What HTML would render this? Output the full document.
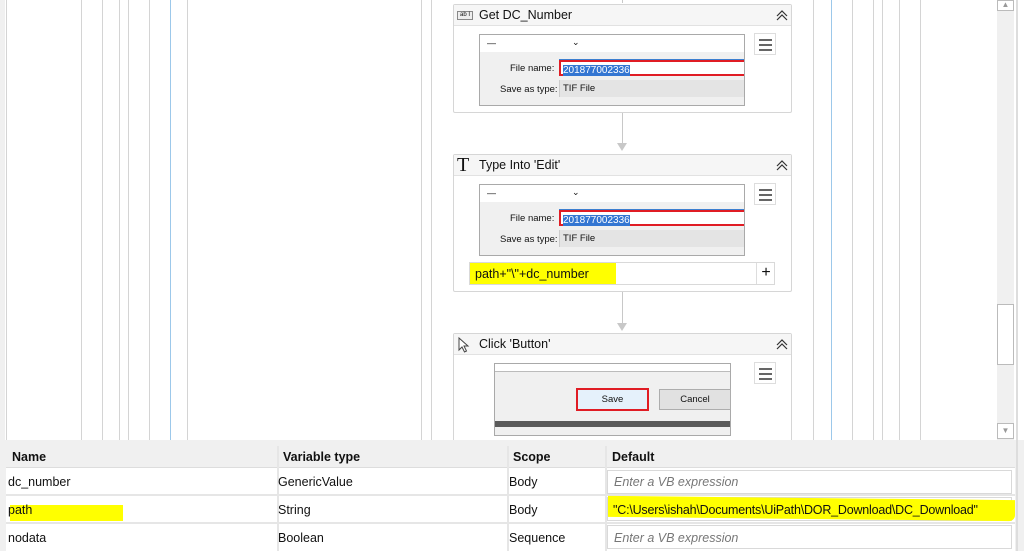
<!DOCTYPE html>
<html><head><meta charset="utf-8"><style>
*{margin:0;padding:0;box-sizing:border-box}
body{width:1024px;height:551px;position:relative;overflow:hidden;background:#fff;font-family:"Liberation Sans",sans-serif;font-size:12px;color:#111}
.a{position:absolute}
.vl{position:absolute;top:0;height:440px;width:1px;background:#d4d4d4}
.card{position:absolute;border:1px solid #d6d6d6;border-radius:2px;background:#fff}
.hd{position:absolute;left:0;right:0;top:0;height:21px;background:#f6f6f6;border-bottom:1px solid #e2e2e2;font-size:12.5px}
.hd span{position:absolute;left:25px;top:3px}
.chev{position:absolute;right:3px;top:5px}
.dlg{position:absolute;border:1px solid #a9a9a9;background:#f0f0f0;overflow:hidden}
.ham{position:absolute;width:22px;height:22px;border:1px solid #ddd;background:#fff}
.ham i{position:absolute;left:4px;width:13px;height:2px;background:#666}
.arrow{position:absolute;width:1px;background:#c8c8c8}
.tri{position:absolute;width:0;height:0;border-left:5px solid transparent;border-right:5px solid transparent;border-top:8px solid #c8c8c8}
.cell{position:absolute;font-size:12.5px}
.inp{position:absolute;border:1px solid #d9d9d9;background:#fff;font-size:12.5px;padding:6px 0 0 6px}
.pan{z-index:5}
</style></head><body>
<div class="a" style="left:0;top:0;width:5px;height:440px;background:#f0f0f0"></div>
<div class="vl" style="left:6px"></div>
<div class="vl" style="left:81px"></div><div class="vl" style="left:102px"></div><div class="vl" style="left:119px"></div><div class="vl" style="left:128px"></div><div class="vl" style="left:149px"></div><div class="vl" style="left:170px;background:#9cc8ea"></div><div class="vl" style="left:187px"></div><div class="vl" style="left:421px"></div><div class="vl" style="left:431px"></div>
<div class="vl" style="left:813px"></div><div class="vl" style="left:831px;background:#9cc8ea"></div><div class="vl" style="left:852px"></div><div class="vl" style="left:873px"></div><div class="vl" style="left:882px"></div><div class="vl" style="left:899px"></div><div class="vl" style="left:920px"></div>
<div class="a" style="left:997px;top:0;width:17px;height:440px;background:#f0f0f0"></div>
<div class="a" style="left:997px;top:0;width:17px;height:11px;border:1px solid #bbb;background:#fff;font-size:8px;color:#999;text-align:center;line-height:8px">▲</div>
<div class="a" style="left:997px;top:304px;width:17px;height:61px;border:1px solid #bbb;background:#fff"></div>
<div class="a" style="left:997px;top:423px;width:17px;height:16px;border:1px solid #bbb;background:#fff;font-size:8px;color:#999;text-align:center;line-height:14px">▼</div>
<div class="a" style="left:1016px;top:0;width:2px;height:551px;background:#ddd;z-index:6"></div>

<div class="arrow" style="left:622px;top:0;height:3px"></div>
<div class="arrow" style="left:622px;top:113px;height:30px"></div><div class="tri" style="left:617px;top:143px"></div>
<div class="arrow" style="left:622px;top:292px;height:31px"></div><div class="tri" style="left:617px;top:323px"></div>

<div class="card" style="left:453px;top:4px;width:339px;height:109px">
 <div class="hd"><div class="a" style="left:3px;top:6px;width:16px;height:9px;border:1px solid #888;font-size:6px;line-height:7px;text-align:center;background:#eee">ab I</div><span>Get DC_Number</span><svg class="chev" width="12" height="11" viewBox="0 0 12 11"><path d="M1 6 L6 1 L11 6 M1 10 L6 5 L11 10" fill="none" stroke="#333" stroke-width="1.2"/></svg></div>
 <div class="dlg" style="left:25px;top:29px;width:266px;height:72px">
  <div class="a" style="left:0;top:0;width:266px;height:17px;background:#fff"></div>
  <div class="a" style="left:7px;top:3px;font-size:9px">—</div>
  <div class="a" style="left:92px;top:2px;font-size:9px">⌄</div>
  <div class="a" style="left:30px;top:28px;font-size:9.5px">File name:</div>
  <div class="a" style="left:79px;top:25px;width:190px;height:16px;border:2px solid #e01c24;background:#fff;box-shadow:0 -1px 0 #3c7fd0"><span style="background:#3476d2;color:#fff;font-size:10px;margin-left:2px">201877002336</span></div>
  <div class="a" style="left:20px;top:49px;font-size:9.5px">Save as type:</div>
  <div class="a" style="left:79px;top:45px;width:190px;height:17px;background:#e4e4e4;border-left:1px solid #ccc;font-size:9.5px;padding:3px 0 0 3px">TIF File</div>
 </div>
 <div class="ham" style="left:300px;top:28px"><i style="top:5px"></i><i style="top:10px"></i><i style="top:15px"></i></div>
</div>

<div class="card" style="left:453px;top:154px;width:339px;height:138px">
 <div class="hd"><div class="a" style="left:3px;top:0;font-family:'Liberation Serif',serif;font-size:20px;line-height:20px">T</div><span>Type Into 'Edit'</span><svg class="chev" width="12" height="11" viewBox="0 0 12 11"><path d="M1 6 L6 1 L11 6 M1 10 L6 5 L11 10" fill="none" stroke="#333" stroke-width="1.2"/></svg></div>
 <div class="dlg" style="left:25px;top:29px;width:266px;height:72px">
  <div class="a" style="left:0;top:0;width:266px;height:17px;background:#fff"></div>
  <div class="a" style="left:7px;top:3px;font-size:9px">—</div>
  <div class="a" style="left:92px;top:2px;font-size:9px">⌄</div>
  <div class="a" style="left:30px;top:28px;font-size:9.5px">File name:</div>
  <div class="a" style="left:79px;top:25px;width:190px;height:16px;border:2px solid #e01c24;background:#fff;box-shadow:0 -1px 0 #3c7fd0"><span style="background:#3476d2;color:#fff;font-size:10px;margin-left:2px">201877002336</span></div>
  <div class="a" style="left:20px;top:49px;font-size:9.5px">Save as type:</div>
  <div class="a" style="left:79px;top:45px;width:190px;height:17px;background:#e4e4e4;border-left:1px solid #ccc;font-size:9.5px;padding:3px 0 0 3px">TIF File</div>
 </div>
 <div class="ham" style="left:300px;top:28px"><i style="top:5px"></i><i style="top:10px"></i><i style="top:15px"></i></div>
 <div class="a" style="left:15px;top:107px;width:306px;height:23px;border:1px solid #d9d9d9;background:#fff"></div>
 <div class="a" style="left:16px;top:108px;width:146px;height:21px;background:#ffff00;font-size:12.5px;padding:4px 0 0 5px">path+"\"+dc_number</div>
 <div class="a" style="left:302px;top:108px;width:19px;height:21px;border-left:1px solid #ddd;font-size:16px;text-align:center;line-height:20px">+</div>
</div>

<div class="card" style="left:453px;top:333px;width:339px;height:130px">
 <div class="hd"><svg class="a" style="left:4px;top:3px" width="12" height="16" viewBox="0 0 12 16"><path d="M1 1 L1 13 L4 10 L6.5 15 L8.5 14 L6 9 L10 9 Z" fill="#fff" stroke="#444" stroke-width="1"/></svg><span>Click 'Button'</span><svg class="chev" width="12" height="11" viewBox="0 0 12 11"><path d="M1 6 L6 1 L11 6 M1 10 L6 5 L11 10" fill="none" stroke="#333" stroke-width="1.2"/></svg></div>
 <div class="a" style="left:40px;top:29px;width:237px;height:73px;border:1px solid #a9a9a9;background:#f0f0f0">
  <div class="a" style="left:0;top:0;width:235px;height:8px;background:#fff;border-bottom:1px solid #bbb"></div>
  <div class="a" style="left:81px;top:24px;width:73px;height:23px;border:2px solid #e01c24;background:#e5f1fb;text-align:center;font-size:9.5px;line-height:19px">Save</div>
  <div class="a" style="left:164px;top:25px;width:72px;height:21px;border:1px solid #adadad;background:#e1e1e1;text-align:center;font-size:9.5px;line-height:19px">Cancel</div>
  <div class="a" style="left:0;top:57px;width:235px;height:6px;background:#5a5a5a"></div>
 </div>
 <div class="ham" style="left:300px;top:28px"><i style="top:5px"></i><i style="top:10px"></i><i style="top:15px"></i></div>
</div>

<div class="a pan" style="left:0;top:440px;width:1024px;height:111px;background:#f0f0f0"></div>
<div class="a pan" style="left:6px;top:446px;width:1009px;height:22px;background:#f0f0f0;border-bottom:1px solid #ddd"></div>
<div class="a pan" style="left:6px;top:468px;width:1009px;height:83px;background:#fff"></div>
<div class="a pan" style="left:6px;top:494px;width:1009px;height:2px;background:#e6e6e6"></div>
<div class="a pan" style="left:6px;top:522px;width:1009px;height:2px;background:#e6e6e6"></div>
<div class="a pan" style="left:277px;top:446px;width:2px;height:105px;background:#e6e6e6"></div>
<div class="a pan" style="left:507px;top:446px;width:2px;height:105px;background:#e6e6e6"></div>
<div class="a pan" style="left:605px;top:446px;width:2px;height:105px;background:#e6e6e6"></div>
<div class="cell pan" style="left:12px;top:450px;font-weight:bold">Name</div>
<div class="cell pan" style="left:283px;top:450px;font-weight:bold">Variable type</div>
<div class="cell pan" style="left:513px;top:450px;font-weight:bold">Scope</div>
<div class="cell pan" style="left:612px;top:450px;font-weight:bold">Default</div>

<div class="cell pan" style="left:8px;top:475px">dc_number</div>
<div class="cell pan" style="left:278px;top:475px">GenericValue</div>
<div class="cell pan" style="left:509px;top:475px">Body</div>
<div class="inp pan" style="left:607px;top:470px;width:405px;height:24px;color:#777;font-style:italic;padding-top:4px">Enter a VB expression</div>

<div class="a pan" style="left:10px;top:505px;width:113px;height:16px;background:#ffff00"></div>
<div class="cell pan" style="left:8px;top:503px">path</div>
<div class="cell pan" style="left:278px;top:503px">String</div>
<div class="cell pan" style="left:509px;top:503px">Body</div>
<div class="inp pan" style="left:607px;top:497px;width:405px;height:24px;padding:0"></div>
<div class="a pan" style="left:608px;top:498px;width:407px;height:21px;background:#ffff00;border-radius:0 0 6px 0;transform:skewY(0.6deg)"></div>
<div class="cell pan" style="left:613px;top:503px;letter-spacing:-0.2px">"C:\Users\ishah\Documents\UiPath\DOR_Download\DC_Download"</div>

<div class="cell pan" style="left:8px;top:531px">nodata</div>
<div class="cell pan" style="left:278px;top:531px">Boolean</div>
<div class="cell pan" style="left:509px;top:531px">Sequence</div>
<div class="inp pan" style="left:607px;top:525px;width:405px;height:24px;color:#777;font-style:italic;padding-top:5px">Enter a VB expression</div>
</body></html>
